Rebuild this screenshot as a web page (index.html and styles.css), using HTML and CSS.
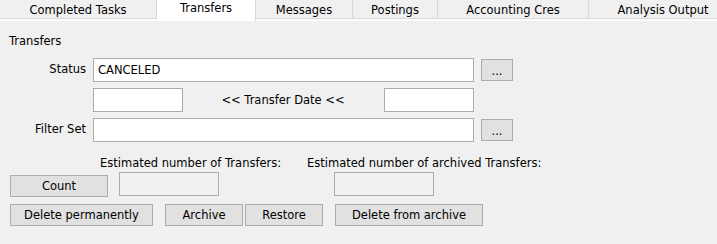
FILE: index.html
```html
<!DOCTYPE html>
<html>
<head>
  <title>Transfers</title>
  <link rel="stylesheet" href="styles.css">
</head>
<body>
  <div class="tabs">
    <div class="tab tab-completed">Completed Tasks</div>
    <div class="tab tab-transfers active">Transfers</div>
    <div class="tab tab-messages">Messages</div>
    <div class="tab tab-postings">Postings</div>
    <div class="tab tab-cres">Accounting Cres</div>
    <div class="tab tab-output">Analysis Output</div>
  </div>
  <div class="tab-line"></div>

  <div class="panel">
    <div class="section-title">Transfers</div>

    <div class="form-grid">
      <label class="field-label">Status</label>
      <div class="text-box">CANCELED</div>
      <button class="btn btn-dots">...</button>

      <span></span>
      <div class="date-row">
        <div class="text-box date-box"></div>
        <span class="date-label">&lt;&lt; Transfer Date &lt;&lt;</span>
        <div class="text-box date-box"></div>
      </div>
      <span></span>

      <label class="field-label">Filter Set</label>
      <div class="text-box"></div>
      <button class="btn btn-dots">...</button>
    </div>

    <div class="estimate-labels">
      <span class="est-label est-transfers">Estimated number of Transfers:</span>
      <span class="est-label est-archived">Estimated number of archived Transfers:</span>
    </div>

    <div class="count-row">
      <button class="btn btn-count">Count</button>
      <div class="count-box count-transfers"></div>
      <div class="count-box count-archived"></div>
    </div>

    <div class="action-row">
      <button class="btn btn-delete">Delete permanently</button>
      <button class="btn btn-archive">Archive</button>
      <button class="btn btn-restore">Restore</button>
      <button class="btn btn-delete-archive">Delete from archive</button>
    </div>
  </div>
</body>
</html>
```

FILE: styles.css
```css
body {
  margin: 0;
  background: #f0f0f0;
  font-family: "DejaVu Sans", sans-serif;
  font-size: 11.5px;
  color: #000;
  overflow: hidden;
}

.tabs {
  display: flex;
  height: 18px;
  border-bottom: 1px solid #d9d9d9;
  background: #f0f0f0;
  white-space: nowrap;
}

.tab {
  flex: none;
  box-sizing: border-box;
  height: 18px;
  padding-top: 3px;
  text-align: center;
  border-right: 1px solid #d9d9d9;
}

.tab.active {
  background: #fff;
  height: 21px;
  padding-top: 1px;
  position: relative;
  z-index: 1;
}

.tab-completed { width: 157px; }
.tab-transfers { width: 99px; }
.tab-messages { width: 97px; }
.tab-postings { width: 85px; }
.tab-cres { width: 151px; }
.tab-output { width: 148px; border-right: none; }

.tab-line {
  height: 2px;
  background: #fcfcfc;
}

.panel {
  padding: 13px 0 0 0;
}

.section-title {
  padding-left: 9px;
  height: 14px;
  line-height: 14px;
}

.form-grid {
  display: grid;
  grid-template-columns: 85px 382px 32px;
  column-gap: 7px;
  row-gap: 6px;
  margin-top: 10px;
  align-items: center;
}

.field-label {
  text-align: right;
  margin-top: -3px;
  margin-right: -1px;
}

.text-box {
  box-sizing: border-box;
  height: 24px;
  margin-left: 1px;
  background: #fff;
  border: 1px solid #ababab;
  padding: 4px 0 0 4px;
}

.btn {
  box-sizing: border-box;
  height: 22px;
  margin: 0;
  padding: 0;
  background: #e1e1e1;
  border: 1px solid #adadad;
  font-family: inherit;
  font-size: 11.5px;
  color: #000;
}

.btn-dots {
  width: 32px;
  padding-top: 2px;
}

.date-row {
  display: flex;
  align-items: center;
}

.date-box {
  width: 90px;
  margin-left: 1px;
}

.date-label {
  flex: 1;
  text-align: center;
}

.estimate-labels {
  display: flex;
  margin-top: 14px;
  height: 14px;
  line-height: 14px;
}

.est-transfers {
  margin-left: 100px;
  width: 207px;
}

.count-row {
  display: flex;
  align-items: flex-start;
  margin-top: 2px;
}

.btn-count {
  width: 98px;
  margin: 3px 0 0 10px;
}

.count-box {
  box-sizing: border-box;
  width: 100px;
  height: 24px;
  border: 1px solid #adadad;
  background: #f0f0f0;
}

.count-transfers { margin-left: 11px; }
.count-archived { margin-left: 115px; }

.action-row {
  display: flex;
  margin-top: 7px;
  padding-left: 10px;
}

.btn-delete { width: 143px; }
.btn-archive { width: 78px; margin-left: 12px; }
.btn-restore { width: 78px; margin-left: 2px; }
.btn-delete-archive { width: 148px; margin-left: 12px; }
```
